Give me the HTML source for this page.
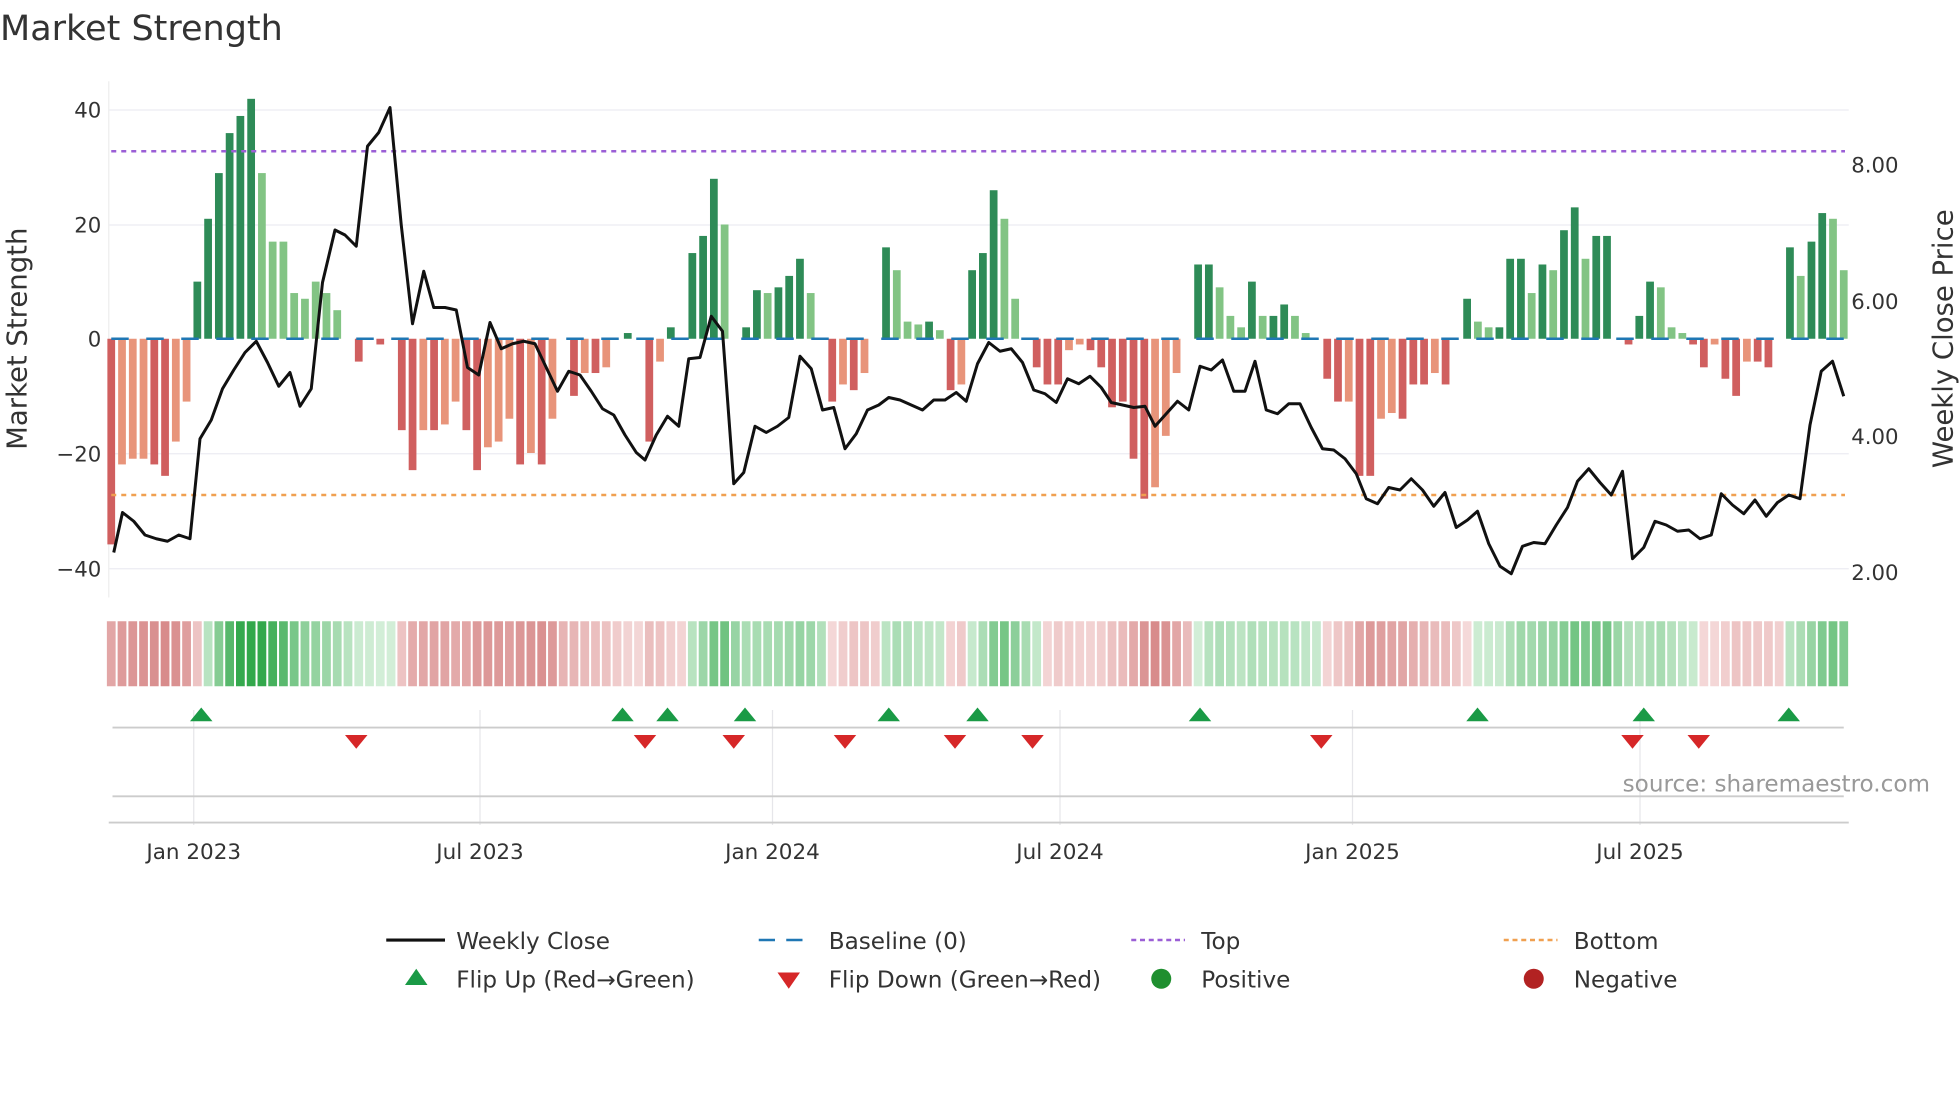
<!DOCTYPE html>
<html><head><meta charset="utf-8"><style>
html,body{margin:0;padding:0;background:#fff;width:1960px;height:1102px;overflow:hidden}
svg{display:block}
text{font-family:"DejaVu Sans","Liberation Sans",sans-serif;fill:#333}
</style></head><body>
<svg id="s" width="1960" height="1102" viewBox="0 0 1568 881.6" xmlns="http://www.w3.org/2000/svg">
<text x="0" y="32" font-size="28" fill="#333">Market Strength</text>
<g stroke="#ececf2" stroke-width="1">
<line x1="87" x2="1479" y1="88" y2="88"/><line x1="87" x2="1479" y1="180" y2="180"/>
<line x1="87" x2="1479" y1="363" y2="363"/><line x1="87" x2="1479" y1="455" y2="455"/>
</g>
<line x1="87" x2="87" y1="65" y2="478" stroke="#eee"/>
<g font-size="17" text-anchor="end">
<text x="81" y="94">40</text><text x="81" y="186">20</text><text x="81" y="277">0</text>
<text x="81" y="369">−20</text><text x="81" y="461">−40</text>
</g>
<g font-size="17">
<text x="1481" y="138">8.00</text><text x="1481" y="247">6.00</text>
<text x="1481" y="355">4.00</text><text x="1481" y="464">2.00</text>
</g>
<text transform="translate(21,271) rotate(-90)" text-anchor="middle" font-size="22">Market Strength</text>
<text transform="translate(1562,271) rotate(-90)" text-anchor="middle" font-size="22">Weekly Close Price</text>
<g id="bars"></g>
<line x1="89" x2="1476" y1="271" y2="271" stroke="#1f77b4" stroke-width="2" stroke-dasharray="14,14"/>
<line x1="89" x2="1476" y1="121" y2="121" stroke="#9b5fd6" stroke-width="2" stroke-dasharray="4,4"/>
<line x1="89" x2="1476" y1="396" y2="396" stroke="#f0a050" stroke-width="2" stroke-dasharray="4,4"/>
<polyline id="price" fill="none" stroke="#111" stroke-width="2.4" stroke-linejoin="round"/>
<g id="heat"></g>
<g stroke="#e6e6ea" stroke-width="1">
<line x1="155" x2="155" y1="568" y2="660"/><line x1="384" x2="384" y1="568" y2="660"/>
<line x1="618" x2="618" y1="568" y2="660"/><line x1="848" x2="848" y1="568" y2="660"/>
<line x1="1082" x2="1082" y1="568" y2="660"/><line x1="1312" x2="1312" y1="568" y2="660"/>
</g>
<line x1="90" x2="1475" y1="582" y2="582" stroke="#ccc" stroke-width="1.5"/>
<line x1="90" x2="1475" y1="637" y2="637" stroke="#ccc" stroke-width="1.5"/>
<line x1="87" x2="1479" y1="658" y2="658" stroke="#ccc" stroke-width="1.5"/>
<g id="marks"></g>
<text x="1544" y="633" text-anchor="end" font-size="18.5" style="fill:#999">source: sharemaestro.com</text>
<g font-size="17.2" text-anchor="middle">
<text x="155" y="687">Jan 2023</text><text x="384" y="687">Jul 2023</text><text x="618" y="687">Jan 2024</text>
<text x="848" y="687">Jul 2024</text><text x="1082" y="687">Jan 2025</text><text x="1312" y="687">Jul 2025</text>
</g>
<g font-size="18.5">
<line x1="309" x2="356" y1="752" y2="752" stroke="#111" stroke-width="2.5"/><text x="365" y="759">Weekly Close</text>
<line x1="607" x2="650" y1="752" y2="752" stroke="#1f77b4" stroke-width="2" stroke-dasharray="13,9"/><text x="663" y="759">Baseline (0)</text>
<line x1="905" x2="948" y1="752" y2="752" stroke="#9b5fd6" stroke-width="2" stroke-dasharray="4,3"/><text x="961" y="759">Top</text>
<line x1="1203" x2="1246" y1="752" y2="752" stroke="#f0a050" stroke-width="2" stroke-dasharray="4,3"/><text x="1259" y="759">Bottom</text>
<polygon points="324,788 342,788 333,775" fill="#1a9a46"/><text x="365" y="790">Flip Up (Red→Green)</text>
<polygon points="622,778 640,778 631,791" fill="#d62728"/><text x="663" y="790">Flip Down (Green→Red)</text>
<circle cx="929" cy="783" r="8" fill="#1f8f2f"/><text x="961" y="790">Positive</text>
<circle cx="1227" cy="783" r="8" fill="#b22222"/><text x="1259" y="790">Negative</text>
</g>
</svg>
<script>
var V=[[-36,1],[-22,0],[-21,0],[-21,0],[-22,1],[-24,1],[-18,0],[-11,0],[10,1],[21,1],[29,1],[36,1],[39,1],[42,1],[29,0],[17,0],[17,0],[8,0],[7,0],[10,0],[8,0],[5,0],[0,0],[-4,1],[0,0],[-1,1],[0,0],[-16,1],[-23,1],[-16,0],[-16,1],[-15,0],[-11,0],[-16,1],[-23,1],[-19,0],[-18,0],[-14,0],[-22,1],[-20,0],[-22,1],[-14,0],[0,0],[-10,1],[-6,0],[-6,1],[-5,0],[0,0],[1,1],[0,0],[-18,1],[-4,0],[2,1],[0,0],[15,1],[18,1],[28,1],[20,0],[0,0],[2,1],[8.5,1],[8,0],[9,1],[11,1],[14,1],[8,0],[0,0],[-11,1],[-8,0],[-9,1],[-6,0],[0,0],[16,1],[12,0],[3,0],[2.5,0],[3,1],[1.5,0],[-9,1],[-8,0],[12,1],[15,1],[26,1],[21,0],[7,0],[0,0],[-5,1],[-8,1],[-8,1],[-2,0],[-1,0],[-2,1],[-5,1],[-12,1],[-11,1],[-21,1],[-28,1],[-26,0],[-17,0],[-6,0],[0,0],[13,1],[13,1],[9,0],[4,0],[2,0],[10,1],[4,0],[4,1],[6,1],[4,0],[1,0],[0,0],[-7,1],[-11,1],[-11,0],[-24,1],[-24,1],[-14,0],[-13,0],[-14,1],[-8,1],[-8,1],[-6,0],[-8,1],[0,0],[7,1],[3,0],[2,0],[2,1],[14,1],[14,1],[8,0],[13,1],[12,0],[19,1],[23,1],[14,0],[18,1],[18,1],[0,0],[-1,1],[4,1],[10,1],[9,0],[2,0],[1,0],[-1,1],[-5,1],[-1,0],[-7,1],[-10,1],[-4,0],[-4,1],[-5,1],[0,0],[16,1],[11,0],[17,1],[22,1],[21,0],[12,0]];
var ns="http://www.w3.org/2000/svg",n=V.length,x0=89,x1=1475,sp=(x1-x0)/(n-1),w=sp*0.72;
var B=document.getElementById('bars'),H=document.getElementById('heat'),acc=0;
function el(t,a,p){var e=document.createElementNS(ns,t);for(var k in a)e.setAttribute(k,a[k]);p.appendChild(e);return e;}
for(var i=0;i<n;i++){var v=V[i][0],d=V[i][1],cx=x0+i*sp,h=Math.abs(v)*4.57;
 if(h>0.5){var c=v>0?(d?'#2e8b57':'#82c484'):(d?'#d05f5f':'#e8947a');
 el('rect',{x:cx-w/2,y:v>0?271-h:271,width:w,height:h,fill:c},B);}
 acc=acc*0.6+v*0.4; var a=Math.min(1,Math.abs(acc)/30);
 var col;if(acc>=0){col='rgb('+Math.round(210-160*a)+','+Math.round(238-70*a)+','+Math.round(215-140*a)+')';}
 else{col='rgb('+Math.round(245-40*a)+','+Math.round(218-108*a)+','+Math.round(218-108*a)+')';}
 el('rect',{x:cx-sp/2+0.8,y:497,width:sp-1.6,height:52,fill:col},H);}
var P=[[91,442],[98,410],[107,417],[116,428],[125,431],[134,433],[143,428],[152,431],[160,351],[169,336],[178,311],[187,296],[196,282],[205,273],[214,290],[223,309],[232,298],[240,325],[249,311],[258,226],[268,184],[276,188],[285,197],[294,117],[303,106],[312,86],[321,180],[330,259],[339,217],[347,246],[356,246],[365,248],[374,294],[383,300],[392,258],[401,279],[410,275],[419,273],[428,275],[437,294],[446,313],[455,297],[464,300],[473,313],[482,327],[491,332],[500,348],[509,362],[516,368],[525,348],[534,333],[543,341],[551,287],[560,286],[569,253],[578,265],[587,387],[595,378],[604,341],[613,346],[622,341],[631,334],[640,285],[649,295],[658,328],[667,326],[676,359],[685,347],[694,328],[703,324],[711,318],[720,320],[729,324],[738,328],[747,320],[756,320],[765,314],[773,321],[782,291],[791,274],[800,281],[809,279],[818,290],[827,312],[836,315],[845,322],[854,303],[863,307],[872,301],[881,310],[889,322],[898,324],[907,326],[916,325],[924,341],[933,331],[942,321],[951,328],[960,293],[969,296],[978,288],[987,313],[996,313],[1004,289],[1013,328],[1022,331],[1031,323],[1040,323],[1049,342],[1058,359],[1067,360],[1076,367],[1085,379],[1093,399],[1102,403],[1111,390],[1120,392],[1129,383],[1138,392],[1147,405],[1156,394],[1165,422],[1174,416],[1182,409],[1191,435],[1200,453],[1209,459],[1218,437],[1227,434],[1236,435],[1245,420],[1254,406],[1262,385],[1271,375],[1280,386],[1289,396],[1298,377],[1306,447],[1315,438],[1324,417],[1333,420],[1342,425],[1351,424],[1360,431],[1369,428],[1377,395],[1386,404],[1395,411],[1404,400],[1413,413],[1422,402],[1431,396],[1440,399],[1448,340],[1457,297],[1466,289],[1475,317]];
document.getElementById('price').setAttribute('points',P.map(function(p){return p.join(',')}).join(' '));
var M=document.getElementById('marks');
[161,498,534,596,711,782,960,1182,1315,1431].forEach(function(x){el('polygon',{points:(x-9)+',577 '+(x+9)+',577 '+x+',566',fill:'#1a9a46'},M);});
[285,516,587,676,764,826,1057,1306,1359].forEach(function(x){el('polygon',{points:(x-9)+',588 '+(x+9)+',588 '+x+',599',fill:'#d62728'},M);});
</script>
</body></html>
